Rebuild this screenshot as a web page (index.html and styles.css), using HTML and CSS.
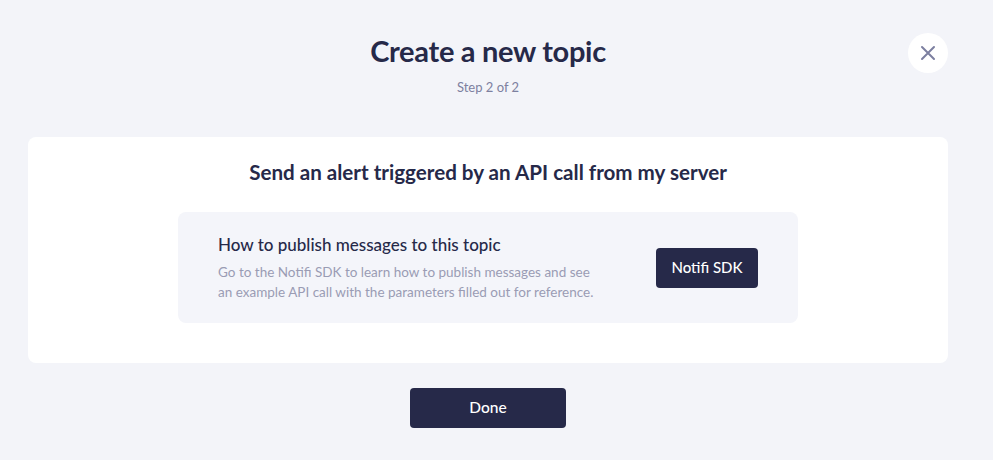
FILE: index.html
```html
<!DOCTYPE html>
<html>
<head>
<meta charset="utf-8">
<link rel="stylesheet" href="styles.css">
</head>
<body>
<div class="page">
  <header class="header">
    <h1 class="title">Create a new topic</h1>
    <div class="step">Step 2 of 2</div>
    <button class="close" aria-label="Close">
      <svg width="16" height="16" viewBox="0 0 16 16"><path d="M2 2L14 14M14 2L2 14" stroke="#7c7fa0" stroke-width="2" stroke-linecap="round" fill="none"/></svg>
    </button>
  </header>
  <section class="card">
    <h2 class="card-title">Send an alert triggered by an API call from my server</h2>
    <div class="info">
      <div class="info-text">
        <h3 class="info-title">How to publish messages to this topic</h3>
        <p class="info-desc">Go to the Notifi SDK to learn how to publish messages and see an example API call with the parameters filled out for reference.</p>
      </div>
      <button class="btn btn-sdk">Notifi SDK</button>
    </div>
  </section>
  <div class="footer">
    <button class="btn btn-done">Done</button>
  </div>
</div>
</body>
</html>
```
FILE: styles.css
```css
* { box-sizing: border-box; }
html, body { margin: 0; padding: 0; }
body {
  background: #f3f4f9;
  font-family: Lato, "Noto Sans", sans-serif;
  color: #262949;
  width: 993px;
  height: 460px;
  overflow: hidden;
}
.page {
  width: 920px;
  margin-left: 28px;
}
.header {
  position: relative;
  text-align: center;
  padding-top: 33px;
  height: 137px;
}
.title {
  margin: 0;
  font-size: 29px;
  font-weight: 700;
  line-height: 36px;
  letter-spacing: -0.3px;
}
.step {
  margin-top: 10px;
  font-size: 13px;
  color: #7d80a0;
  line-height: 16px;
}
.close {
  position: absolute;
  top: 33px;
  right: 0;
  width: 40px;
  height: 40px;
  border-radius: 50%;
  border: none;
  background: #fff;
  display: flex;
  align-items: center;
  justify-content: center;
  padding: 0;
}
.card {
  background: #fff;
  border-radius: 8px;
  height: 226px;
  padding-top: 23px;
  display: flex;
  flex-direction: column;
  align-items: center;
}
.card-title {
  margin: 0;
  font-size: 20.6px;
  font-weight: 700;
  line-height: 24px;
}
.info {
  margin-top: 28px;
  width: 620px;
  height: 111px;
  background: #f4f5fa;
  border-radius: 8px;
  display: flex;
  align-items: center;
  justify-content: space-between;
  padding: 0 40px;
}
.info-text { width: 385px; }
.info-title {
  margin: 0;
  font-size: 17px;
  font-weight: 500;
  line-height: 22px;
}
.info-desc {
  margin: 6px 0 0;
  font-size: 13.5px;
  line-height: 20px;
  color: #9a9cb4;
}
.btn {
  border: none;
  background: #262949;
  color: #fff;
  font-family: inherit;
  font-size: 15px;
  font-weight: 500;
  border-radius: 4px;
  height: 40px;
  padding: 0 0 2px;
}
.btn-sdk { width: 102px; }
.footer {
  display: flex;
  justify-content: center;
  padding-top: 25px;
}
.btn-done { width: 156px; font-size: 15.5px; }
```
